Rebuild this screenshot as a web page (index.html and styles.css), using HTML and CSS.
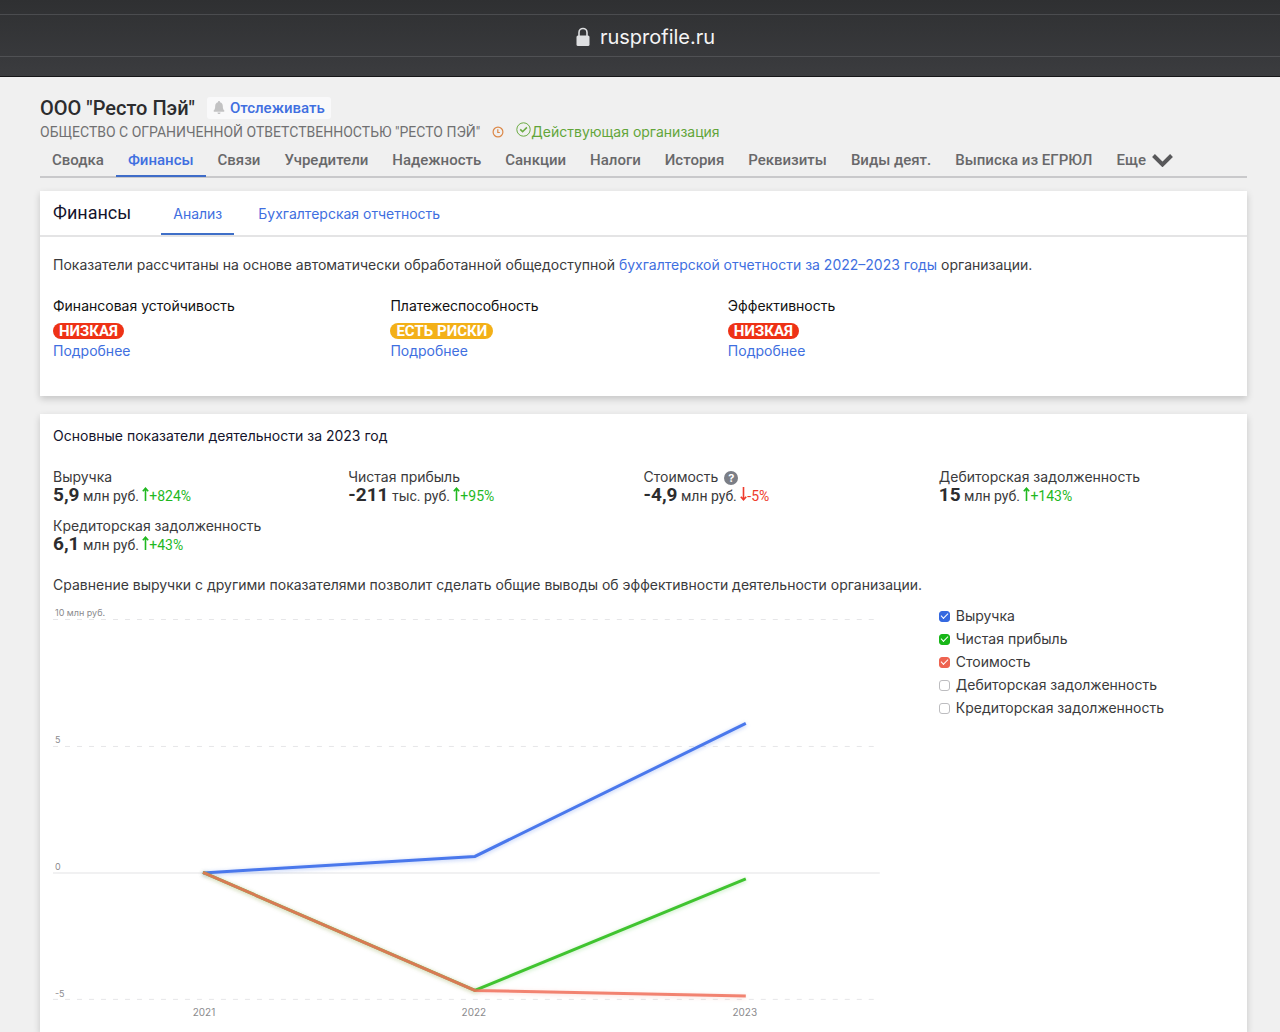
FILE: index.html
```html
<!DOCTYPE html>
<html lang="ru">
<head>
<meta charset="utf-8">
<meta name="viewport" content="width=device-width, initial-scale=1">
<title>ООО "Ресто Пэй" — финансы</title>
<link rel="stylesheet" href="styles.css">
</head>
<body>
<svg class="sprite">
  <symbol id="up" viewBox="0 0 7 14"><path d="M3.500 14V2M.8 4.200l2.700-3 2.700 3" fill="none" stroke="currentColor" stroke-width="1.600"/></symbol>
  <symbol id="down" viewBox="0 0 7 14"><path d="M3.500 0v12M.8 9.800l2.700 3 2.700-3" fill="none" stroke="currentColor" stroke-width="1.600"/></symbol>
</svg>
<div class="browser-bar">
  <div class="address">
    <svg class="lock" width="14" height="20" viewBox="0 0 14 20" aria-hidden="true"><path d="M3 9V5.500a4 4 0 0 1 8 0V9" fill="none" stroke="#dedfe1" stroke-width="1.600"/><rect x="0.500" y="8.500" width="13" height="10.500" rx="1.500" fill="#dedfe1"/></svg>
    <span>rusprofile.ru</span>
  </div>
</div>

<header class="company">
  <div class="title-row">
    <h1>ООО "Ресто Пэй"</h1>
    <button class="watch" type="button">
      <svg width="12" height="13" viewBox="0 0 11 13" aria-hidden="true"><path d="M5.500 0c.6 0 1 .4 1 1v.3C8.500 1.800 9.300 3.300 9.300 5c0 2.700.7 3.700 1.500 4.600.3.500.1 1.200-.5 1.200H.7c-.6 0-.8-.7-.5-1.200C1 8.700 1.700 7.700 1.700 5c0-1.700.8-3.200 2.800-3.700V1c0-.6.400-1 1-1zM4 11.400h3c0 .9-.7 1.600-1.500 1.600S4 12.300 4 11.400z" fill="#c2c2c3"/></svg>
      Отслеживать
    </button>
  </div>
  <div class="status-row">
    <span class="full-name">ОБЩЕСТВО С ОГРАНИЧЕННОЙ ОТВЕТСТВЕННОСТЬЮ "РЕСТО ПЭЙ"</span>
    <svg class="clock" width="12" height="12" viewBox="0 0 12 12" fill="none" stroke="#dc8848" stroke-width="1.200" aria-hidden="true"><circle cx="6" cy="6" r="4.900"/><path d="M5.800 3.300v3.200h2"/></svg>
    <span class="active-state">
      <svg width="15" height="15" viewBox="0 0 15 15" fill="none" stroke="#6bab43" aria-hidden="true"><circle cx="7.500" cy="7.500" r="6.700" stroke-width="1"/><path d="M4.200 7.400l2.400 2.300 4.300-4.300" stroke-width="1.600"/></svg>
      Действующая организация
    </span>
  </div>
  <nav class="tabs">
    <a href="#">Сводка</a>
    <a href="#" class="current">Финансы</a>
    <a href="#">Связи</a>
    <a href="#">Учредители</a>
    <a href="#">Надежность</a>
    <a href="#">Санкции</a>
    <a href="#">Налоги</a>
    <a href="#">История</a>
    <a href="#">Реквизиты</a>
    <a href="#">Виды деят.</a>
    <a href="#">Выписка из ЕГРЮЛ</a>
    <a href="#">Еще <svg width="21" height="13" viewBox="0 0 21 13" aria-hidden="true"><path d="M1.500 1.500l9 9 9-9" fill="none" stroke="#58585a" stroke-width="4"/></svg></a>
  </nav>
</header>

<main>
  <section class="card">
    <div class="card-head">
      <h2>Финансы</h2>
      <a href="#" class="subtab current">Анализ</a>
      <a href="#" class="subtab">Бухгалтерская отчетность</a>
    </div>
    <div class="summary">
      <p>Показатели рассчитаны на основе автоматически обработанной общедоступной <a href="#">бухгалтерской отчетности за 2022–2023 годы</a> организации.</p>
      <div class="ratings">
        <div><h3>Финансовая устойчивость</h3><span class="pill low">НИЗКАЯ</span><a href="#">Подробнее</a></div>
        <div><h3>Платежеспособность</h3><span class="pill risk">ЕСТЬ РИСКИ</span><a href="#">Подробнее</a></div>
        <div><h3>Эффективность</h3><span class="pill low">НИЗКАЯ</span><a href="#">Подробнее</a></div>
      </div>
    </div>
  </section>

  <section class="card metrics">
    <h2>Основные показатели деятельности за 2023 год</h2>
    <dl class="figures">
      <div><dt>Выручка</dt><dd><b>5,9</b> млн руб. <span class="up"><svg><use href="#up"/></svg>+824%</span></dd></div>
      <div><dt>Чистая прибыль</dt><dd><b>-211</b> тыс. руб. <span class="up"><svg><use href="#up"/></svg>+95%</span></dd></div>
      <div><dt>Стоимость <span class="help">?</span></dt><dd><b>-4,9</b> млн руб. <span class="down"><svg><use href="#down"/></svg>-5%</span></dd></div>
      <div><dt>Дебиторская задолженность</dt><dd><b>15</b> млн руб. <span class="up"><svg><use href="#up"/></svg>+143%</span></dd></div>
      <div><dt>Кредиторская задолженность</dt><dd><b>6,1</b> млн руб. <span class="up"><svg><use href="#up"/></svg>+43%</span></dd></div>
    </dl>
    <p>Сравнение выручки с другими показателями позволит сделать общие выводы об эффективности деятельности организации.</p>
    <div class="chart-row">
      <svg class="chart" viewBox="0 0 886 424" role="img" aria-label="Динамика показателей за 2021–2023 годы">
        <g class="grid">
          <path d="M0 20.500H822M0 147.500H822M0 400.500H822"/>
          <path class="zero" d="M0 274H827"/>
        </g>
        <g class="axis">
          <text x="2" y="17">10 млн руб.</text>
          <text x="2" y="144">5</text>
          <text x="2" y="271">0</text>
          <text x="2" y="398">-5</text>
          <text x="151" y="417" class="year">2021</text>
          <text x="421" y="417" class="year">2022</text>
          <text x="692" y="417" class="year">2023</text>
        </g>
        <g class="lines">
          <path class="revenue" d="M150 274L422 257.500L693 124.500"/>
          <path class="profit" d="M150 273.500L422 391.500L693 280"/>
          <path class="value" d="M150 273.500L422 391.500L693 397"/>
        </g>
      </svg>
      <div class="legend">
        <label><input type="checkbox" class="c-revenue" checked>Выручка</label>
        <label><input type="checkbox" class="c-profit" checked>Чистая прибыль</label>
        <label><input type="checkbox" class="c-value" checked>Стоимость</label>
        <label><input type="checkbox">Дебиторская задолженность</label>
        <label><input type="checkbox">Кредиторская задолженность</label>
      </div>
    </div>
  </section>
</main>
</body>
</html>
```
FILE: styles.css
```css
* { box-sizing: border-box; }

body {
  margin: 0;
  min-height: 100vh;
  display: flex;
  flex-direction: column;
  background: #f0f0f0;
  color: #3a3a3c;
  font: 14px/20px Inter, "Noto Sans", sans-serif;
}

h1, h2, h3, p, dl, dd { margin: 0; font-weight: 400; }
a { color: #3f6fe0; text-decoration: none; }
.sprite { display: none; }

.browser-bar {
  padding: 14px 0 19px;
  background: linear-gradient(#2f3032, #3b3c3f);
  border-bottom: 1px solid #161618;
}
.address {
  display: flex;
  justify-content: center;
  align-items: center;
  gap: 10px;
  height: 43px;
  padding: 3px 0 0 11px;
  border-top: 1px solid #4b4c4f;
  border-bottom: 1px solid #505154;
  color: #f4f4f5;
  font: 20px/26px Inter, sans-serif;
}

.company { padding: 17px 33px 0 40px; }
.title-row { display: flex; align-items: center; gap: 12px; height: 27px; }
h1 { color: #2c2c2e; font: 500 20px/26px Roboto, sans-serif; }
.watch {
  display: flex;
  align-items: center;
  gap: 5px;
  height: 22px;
  padding: 0 6px;
  border: 0;
  border-radius: 3px;
  background: #f9f9fa;
  color: #3f6fe0;
  font: 500 15px/20px Roboto, sans-serif;
}
.status-row { display: flex; align-items: center; gap: 6px; height: 22px; color: #707072; }
.full-name { padding-right: 6px; font: 14px/20px Roboto, sans-serif; }
.active-state { display: flex; padding-left: 6px; color: #62a53a; }
.tabs {
  display: flex;
  margin-top: 3px;
  padding-top: 6px;
  border-bottom: 2px solid #c9c9cb;
}
.tabs a {
  display: flex;
  align-items: center;
  gap: 6px;
  height: 25px;
  margin-bottom: -1px;
  padding: 0 12px 7px;
  border-bottom: 2px solid transparent;
  color: #68686a;
  font: 500 15px/20px Roboto, sans-serif;
  white-space: nowrap;
}
.tabs .current { border-color: #3f6cc8; color: #3f6fe0; }

main {
  flex: 1;
  display: flex;
  flex-direction: column;
  gap: 18px;
  padding: 13px 33px 0 40px;
}
.card { background: #fff; box-shadow: 0 3px 7px rgba(0, 0, 0, 0.18); }
.card-head {
  display: flex;
  gap: 12px;
  height: 46px;
  padding-left: 13px;
  border-bottom: 2px solid #e4e4e5;
}
.card-head h2 { margin-right: 18px; color: #14142c; font: 18px/43px Roboto, sans-serif; }
.subtab { padding: 0 12px; line-height: 46px; }
.subtab.current { border-bottom: 2px solid #3f6fc8; }
.summary { padding: 18px 13px 35px; }
.ratings { display: grid; grid-template-columns: 2fr 2fr 3fr; margin-top: 19px; }
.ratings > div { display: flex; flex-direction: column; align-items: flex-start; }
.ratings h3 { margin-bottom: 5px; color: #111; font-size: 14px; line-height: 24px; }
.pill {
  margin-bottom: 2px;
  padding: 0 6px;
  border-radius: 8px;
  color: #fff;
  font: 700 15px/16px Roboto, sans-serif;
}
.low { background: #ee3216; }
.risk { background: #f3b018; }

.metrics { flex: 1; padding: 12px 13px 0; }
.metrics h2 { color: #14142c; font-size: 14px; }
.figures {
  display: grid;
  grid-template-columns: repeat(4, 1fr);
  row-gap: 12px;
  margin: 21px 0 22px;
}
.figures dt { line-height: 20px; }
.figures dd { font: 14px/16px Roboto, sans-serif; white-space: nowrap; }
.figures b { color: #2c2c2e; font-size: 19px; font-weight: 700; line-height: 16px; }
.figures svg { width: 7px; height: 14px; }
.up { color: #1fb81f; }
.down { color: #ee3a2c; }
.help {
  display: inline-block;
  width: 14px;
  margin-left: 2px;
  border-radius: 50%;
  background: #7b7e86;
  color: #fff;
  font-size: 11px;
  font-weight: 700;
  line-height: 14px;
  text-align: center;
}

.chart-row { display: grid; grid-template-columns: 3fr 1fr; margin-top: 4px; }
.chart { display: block; width: 100%; }
.grid { fill: none; stroke: #e6e6e8; stroke-dasharray: 5 7; }
.grid .zero { stroke: #f1f1f2; stroke-dasharray: none; stroke-width: 2; }
.axis { fill: #8b8b8e; font-size: 9px; }
.year { font-size: 10px; text-anchor: middle; }
.lines { fill: none; stroke-width: 3; }
.lines path { filter: drop-shadow(0 1px 2px var(--glow)); }
.revenue { --glow: #4a78ec66; stroke: #4a78ec; }
.profit { --glow: #40c43055; stroke: #40c430; }
.value { --glow: #f0705a44; stroke: #f0705a; stroke-opacity: 0.85; }

.legend { display: flex; flex-direction: column; gap: 3px; padding-top: 7px; }
.legend label { display: flex; align-items: center; gap: 6px; }
.legend input {
  appearance: none;
  display: grid;
  place-items: center;
  width: 11px;
  height: 11px;
  margin: 0;
  border: 1px solid #bdbdc0;
  border-radius: 3px;
  background: #fff;
}
.legend input:checked::before {
  content: "";
  width: 6px;
  height: 3px;
  margin-bottom: 2px;
  border: solid #fff;
  border-width: 0 0 1px 1px;
  transform: rotate(-45deg);
}
.legend .c-revenue { border-color: #3569e0; background: #3569e0; }
.legend .c-profit { border-color: #18b618; background: #18b618; }
.legend .c-value { border-color: #ee6350; background: #ee6350; }
```
